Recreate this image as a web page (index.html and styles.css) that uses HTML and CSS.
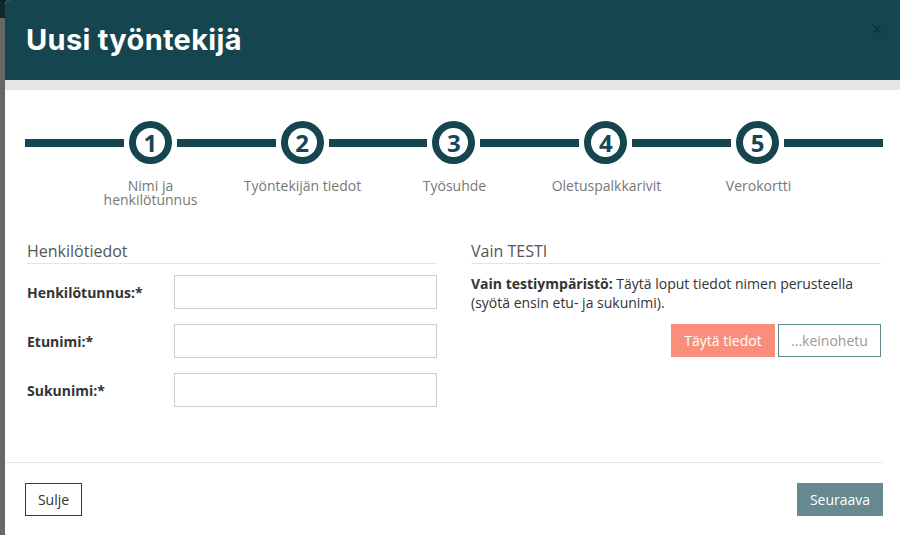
FILE: index.html
```html
<!DOCTYPE html>
<html lang="fi">
<head>
<meta charset="utf-8">
<title>Uusi työntekijä</title>
<link rel="stylesheet" href="styles.css">
</head>
<body>
<div class="modal">
  <header class="modal-header">
    <h1 class="title">Uusi työntekijä</h1>
    <button class="close" aria-label="Sulje">
      <svg width="10" height="10" viewBox="0 0 10 10"><path d="M1 1L9 9M9 1L1 9" stroke="#0b3339" stroke-width="1.6" fill="none"/></svg>
    </button>
  </header>
  <div class="band"></div>
  <div class="modal-body">
    <div class="stepper">
      <div class="track">
        <span class="line"></span>
        <span class="circle">1</span>
        <span class="line"></span>
        <span class="circle">2</span>
        <span class="line"></span>
        <span class="circle">3</span>
        <span class="line"></span>
        <span class="circle">4</span>
        <span class="line"></span>
        <span class="circle">5</span>
        <span class="line"></span>
      </div>
      <div class="labels">
        <span class="step-label">Nimi ja henkilötunnus</span>
        <span class="step-label">Työntekijän tiedot</span>
        <span class="step-label">Työsuhde</span>
        <span class="step-label">Oletuspalkkarivit</span>
        <span class="step-label">Verokortti</span>
      </div>
    </div>
    <div class="columns">
      <section class="col">
        <h2 class="section-title">Henkilötiedot</h2>
        <div class="form">
          <div class="row"><label class="lbl">Henkilötunnus:*</label><input class="inp" type="text"></div>
          <div class="row"><label class="lbl">Etunimi:*</label><input class="inp" type="text"></div>
          <div class="row"><label class="lbl">Sukunimi:*</label><input class="inp" type="text"></div>
        </div>
      </section>
      <section class="col">
        <h2 class="section-title">Vain TESTI</h2>
        <p class="note"><strong>Vain testiympäristö:</strong> Täytä loput tiedot nimen perusteella (syötä ensin etu- ja sukunimi).</p>
        <div class="test-actions">
          <button class="btn btn-salmon">Täytä tiedot</button>
          <button class="btn btn-ghost">...keinohetu</button>
        </div>
      </section>
    </div>
  </div>
  <footer class="modal-footer">
    <button class="btn btn-outline">Sulje</button>
    <button class="btn btn-next">Seuraava</button>
  </footer>
</div>
</body>
</html>
```

FILE: styles.css
```css
html, body {
  margin: 0;
  padding: 0;
  height: 100%;
  overflow: hidden;
}
body {
  background: linear-gradient(to bottom, #0d2a2e 0, #0d2a2e 18px, #676767 18px, #676767 100%);
  font-family: "Open Sans", "Liberation Sans", sans-serif;
  color: #333;
}
.modal {
  margin-left: 5px;
  width: 905px;
  height: 100%;
  background: #fff;
  border-top-left-radius: 5px;
  overflow: hidden;
  display: flex;
  flex-direction: column;
}
.modal-header {
  height: 80px;
  background: #15464f;
  display: flex;
  align-items: center;
  justify-content: space-between;
  padding: 0 28px 0 21px;
  box-sizing: border-box;
}
.title {
  margin: 0 0 2px 0;
  font-family: "Inter", "Open Sans", sans-serif;
  font-weight: 700;
  font-size: 29px;
  color: #fff;
  letter-spacing: 0.3px;
}
.close {
  border: 0;
  background: transparent;
  padding: 0;
  margin: 0 0 22px 0;
  opacity: 0.8;
  display: flex;
}
.band {
  height: 10px;
  background: #e5e5e5;
}
.modal-body {
  padding: 31px 19px 0 20px;
  flex: 0 0 auto;
  height: 372px;
  box-sizing: border-box;
}
.stepper {
  width: 858px;
}
.track {
  display: flex;
  align-items: center;
  gap: 5px;
}
.line {
  flex: 1;
  height: 8px;
  background: #15464f;
}
.circle {
  width: 43px;
  height: 43px;
  box-sizing: border-box;
  border: 7px solid #15464f;
  border-radius: 50%;
  display: flex;
  align-items: center;
  justify-content: center;
  font-weight: 700;
  font-size: 24px;
  color: #15465a;
  line-height: 1;
}
.labels {
  display: grid;
  grid-template-columns: repeat(5, 152px);
  justify-content: center;
  margin-top: 15px;
  padding-left: 1px;
}
.step-label {
  justify-self: center;
  max-width: 128px;
  text-align: center;
  font-size: 14px;
  line-height: 14px;
  color: #777;
}
.columns {
  display: grid;
  grid-template-columns: 410px 410px;
  column-gap: 34px;
  margin-top: 33px;
  padding-left: 2px;
}
.section-title {
  margin: 0;
  font-weight: 400;
  font-size: 16px;
  line-height: 22px;
  color: #555;
  padding-bottom: 1px;
  border-bottom: 1px solid #e5e5e5;
}
.form {
  display: flex;
  flex-direction: column;
  gap: 15px;
  margin-top: 11px;
}
.row {
  display: flex;
  align-items: center;
}
.lbl {
  width: 147px;
  font-weight: 700;
  font-size: 14px;
  color: #333;
}
.inp {
  width: 263px;
  height: 34px;
  box-sizing: border-box;
  border: 1px solid #ccc;
  margin: 0;
  padding: 0 8px;
  font: inherit;
}
.note {
  margin: 10px 0 0 0;
  font-size: 14px;
  line-height: 19px;
  color: #333;
}
.test-actions {
  display: flex;
  justify-content: flex-end;
  gap: 3px;
  margin-top: 12px;
}
.btn {
  font-family: "Open Sans", "Liberation Sans", sans-serif;
  font-size: 14px;
  height: 33px;
  box-sizing: border-box;
  padding: 0 12px;
  margin: 0;
  cursor: pointer;
}
.btn-salmon {
  width: 104px;
  background: #f98f7b;
  color: #fff;
  border: 1px solid #f98f7b;
}
.btn-ghost {
  width: 103px;
  background: #fff;
  color: #999;
  border: 1px solid #5e878c;
}
.modal-footer {
  border-top: 1px solid #e5e5e5;
  display: flex;
  justify-content: space-between;
  align-items: flex-start;
  padding: 20px 0 0 20px;
  width: 878px;
  box-sizing: border-box;
}
.btn-outline {
  width: 57px;
  padding: 0;
  background: #fff;
  color: #333;
  border: 1px solid #15464f;
}
.btn-next {
  width: 86px;
  padding: 0;
  background: #668a8f;
  color: #fff;
  border: 1px solid #668a8f;
}
```
